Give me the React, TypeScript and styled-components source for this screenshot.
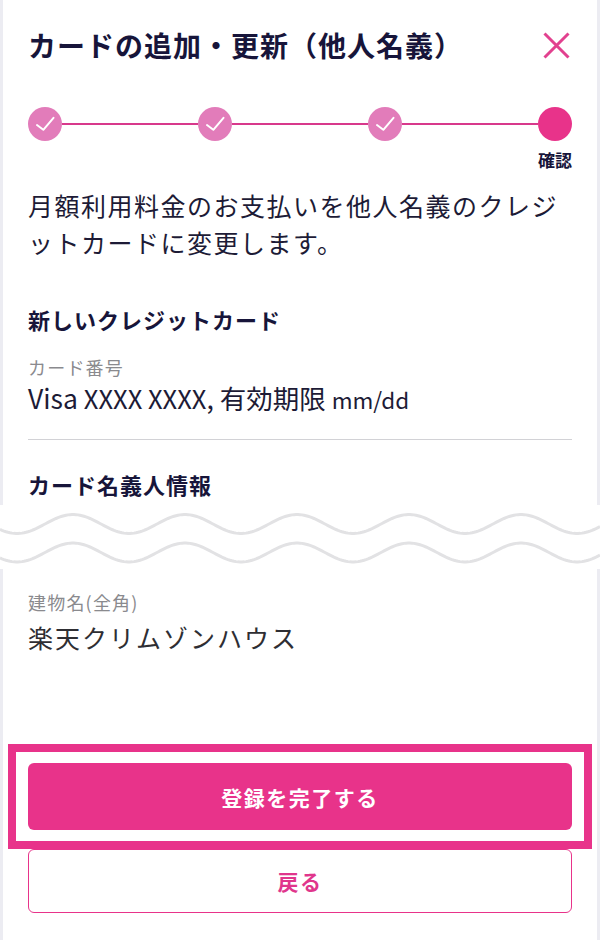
import React from 'react';
import styled, { createGlobalStyle } from 'styled-components';

const PINK = '#e8338a';
const NAVY = '#17153a';

const GlobalStyle = createGlobalStyle`
  html, body {
    margin: 0;
    padding: 0;
    background: #ececf2;
  }
  body {
    font-family: "Noto Sans CJK JP", "Noto Sans", sans-serif;
    color: ${NAVY};
  }
  * {
    box-sizing: border-box;
  }
`;

const Page = styled.div`
  min-height: 100vh;
  margin: 0 3px;
  padding: 28px 25px 27px;
  background: #fff;
  display: flex;
  flex-direction: column;
`;

const Header = styled.header`
  display: flex;
  align-items: center;
  justify-content: space-between;
`;

const Title = styled.h1`
  margin: 0;
  font-size: 28px;
  line-height: 34px;
  letter-spacing: 1px;
  font-weight: 700;
  color: ${NAVY};
`;

const CloseButton = styled.button`
  border: 0;
  padding: 0;
  margin-right: 2px;
  background: none;
  display: flex;
  cursor: pointer;
`;

const Stepper = styled.div`
  margin-top: 45px;
  display: flex;
  align-items: flex-start;
`;

const Step = styled.div`
  width: 34px;
  display: flex;
  flex-direction: column;
  align-items: center;
`;

const Dot = styled.div<{ $done?: boolean }>`
  width: 34px;
  height: 34px;
  border-radius: 50%;
  background: ${(p) => (p.$done ? '#e27cba' : PINK)};
  display: flex;
  align-items: center;
  justify-content: center;
`;

const Connector = styled.div`
  flex: 1;
  height: 2px;
  margin-top: 16px;
  background: #d8398c;
`;

const StepLabel = styled.span`
  margin-top: 9px;
  font-size: 17px;
  line-height: 20px;
  font-weight: 700;
  white-space: nowrap;
  color: ${NAVY};
`;

const Lead = styled.p`
  margin: 17px 0 0;
  font-size: 25px;
  line-height: 37px;
  letter-spacing: 1.5px;
  color: #1d1b36;
`;

const SectionTitle = styled.h2<{ $gap: number }>`
  margin: ${(p) => p.$gap}px 0 0;
  font-size: 22px;
  line-height: 30px;
  font-weight: 700;
  letter-spacing: 1px;
  color: ${NAVY};
`;

const FieldLabel = styled.div<{ $gap: number }>`
  margin-top: ${(p) => p.$gap}px;
  font-size: 18px;
  line-height: 24px;
  letter-spacing: 1.2px;
  color: #8a8a8e;
`;

const FieldValue = styled.div<{ $gap: number; $muted?: boolean }>`
  margin-top: ${(p) => p.$gap}px;
  font-size: ${(p) => (p.$muted ? '25px' : '26.5px')};
  line-height: 34px;
  letter-spacing: ${(p) => (p.$muted ? '2px' : '0')};
  color: ${(p) => (p.$muted ? '#2e2e33' : '#1d1b36')};
  white-space: nowrap;
`;

const Masked = styled.span`
  font-size: 25.5px;
`;

const Small = styled.span`
  font-size: 22.5px;
`;

const Divider = styled.hr`
  margin: 23px 0 0;
  border: 0;
  height: 1px;
  background: #d2d2d6;
`;

const Cut = styled.div`
  margin: 6px -28px 0;
  height: 64px;
  background: #fff;
  display: flex;
`;

const Footer = styled.footer`
  margin-top: auto;
  display: flex;
  flex-direction: column;
`;

const Highlight = styled.div`
  margin: 0 -20px;
  border: 8px solid ${PINK};
  padding: 11px 12px;
  display: flex;
  flex-direction: column;
`;

const Button = styled.button<{ $variant: 'primary' | 'secondary' }>`
  width: 100%;
  height: ${(p) => (p.$variant === 'primary' ? '67px' : '64px')};
  border-radius: 6px;
  border: ${(p) => (p.$variant === 'primary' ? '0' : `1.5px solid ${PINK}`)};
  background: ${(p) => (p.$variant === 'primary' ? PINK : '#fff')};
  color: ${(p) => (p.$variant === 'primary' ? '#fff' : '#e0368c')};
  font-family: inherit;
  font-size: 21px;
  font-weight: 700;
  letter-spacing: 1.5px;
  cursor: pointer;
`;

const Check = () => (
  <svg width="34" height="34" viewBox="0 0 34 34">
    <path d="M9 18 L15.3 22.8 L25.5 10.8" fill="none" stroke="#fff" strokeWidth="2" strokeLinecap="round" strokeLinejoin="round" />
  </svg>
);

const CloseIcon = () => (
  <svg width="27" height="27" viewBox="0 0 27 27">
    <path d="M1.5 1.5 L25.5 25.5 M25.5 1.5 L1.5 25.5" stroke="#e2418f" strokeWidth="3" />
  </svg>
);

// sine line across the cut, peak at x=73, period 112
const wave = (mid: number) => {
  let d = '';
  for (let x = 0; x <= 600; x += 2) {
    const y = mid - 9.5 * Math.sin(((x - 45) / 112) * Math.PI * 2);
    d += `${x === 0 ? 'M' : 'L'}${x} ${y.toFixed(2)} `;
  }
  return d;
};

const steps = [true, true, true, false];

const App: React.FC = () => {
  return (
    <>
      <GlobalStyle />
      <Page>
        <Header>
          <Title>カードの追加・更新（他人名義）</Title>
          <CloseButton aria-label="閉じる">
            <CloseIcon />
          </CloseButton>
        </Header>

        <Stepper>
          {steps.map((done, i) => (
            <React.Fragment key={i}>
              {i > 0 && <Connector />}
              <Step>
                <Dot $done={done}>{done && <Check />}</Dot>
                {!done && <StepLabel>確認</StepLabel>}
              </Step>
            </React.Fragment>
          ))}
        </Stepper>

        <Lead>月額利用料金のお支払いを他人名義のクレジットカードに変更します。</Lead>

        <SectionTitle $gap={43}>新しいクレジットカード</SectionTitle>
        <FieldLabel $gap={21}>カード番号</FieldLabel>
        <FieldValue $gap={2}>
          Visa <Masked>XXXX XXXX</Masked>, 有効期限 <Small>mm/dd</Small>
        </FieldValue>
        <Divider />

        <SectionTitle $gap={29}>カード名義人情報</SectionTitle>
        <Cut>
          <svg width="600" height="64" viewBox="0 0 600 64">
            <path d={wave(19)} fill="none" stroke="#e2e2e4" strokeWidth="3" />
            <path d={wave(47.5)} fill="none" stroke="#e2e2e4" strokeWidth="3" />
          </svg>
        </Cut>
        <FieldLabel $gap={21}>建物名(全角)</FieldLabel>
        <FieldValue $gap={6} $muted>楽天クリムゾンハウス</FieldValue>

        <Footer>
          <Highlight>
            <Button $variant="primary">登録を完了する</Button>
          </Highlight>
          <Button $variant="secondary">戻る</Button>
        </Footer>
      </Page>
    </>
  );
};

export default App;
